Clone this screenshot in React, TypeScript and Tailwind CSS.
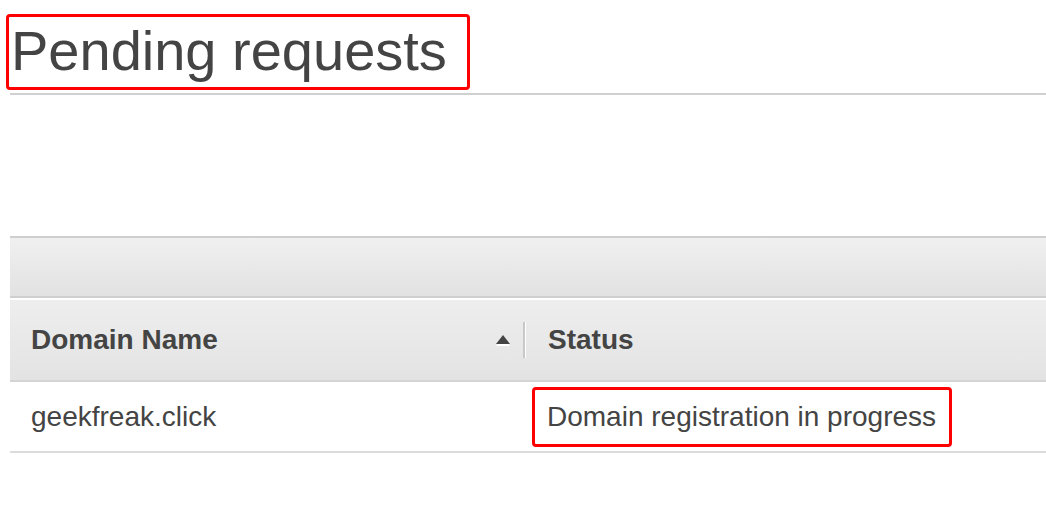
import React from 'react';

type PendingRequest = {
  domain: string;
  status: string;
};

const requests: PendingRequest[] = [
  { domain: 'geekfreak.click', status: 'Domain registration in progress' },
];

const SortArrow = () => (
  <svg width="16" height="11" viewBox="0 0 16 11" className="shrink-0">
    <polygon points="8,1 15,10 1,10" fill="#fff" transform="translate(0,1)" />
    <polygon points="8,0 15,9 1,9" fill="#444" />
  </svg>
);

const App: React.FC = () => {
  return (
    <div
      className="min-h-[516px] w-[1046px] bg-white pl-[10px] text-[#444]"
      style={{ fontFamily: '"Liberation Sans", Arial, Helvetica, sans-serif' }}
    >
      <div className="pt-[14px]">
        <h1 className="-ml-[4px] inline-block w-[464px] rounded-[4px] border-[3px] border-[#ff0000] pt-[2px] pb-[5px] pl-[2px] text-[56px] leading-[63px] font-normal">
          Pending requests
        </h1>
      </div>
      <div className="mt-[3px] h-[2px] bg-[#d0d0d0]" />

      <div className="mt-[141px]">
        <div className="h-[2px] bg-[#cfcfcf]" />
        <div className="h-[58px] bg-gradient-to-b from-[#f0f0f0] to-[#e2e2e2]" />
        <div className="h-[2px] bg-[#cfcfcf]" />
        <div className="h-[2px] bg-white" />

        <div className="flex h-[80px] items-center bg-gradient-to-b from-[#eeeeee] to-[#e3e3e3] text-[28px] font-bold">
          <div className="flex w-[513px] items-center justify-between pl-[21px] pr-[12px]">
            <span>Domain Name</span>
            <SortArrow />
          </div>
          <div className="flex h-[36px] w-[3px] shrink-0">
            <div className="w-[2px] bg-[#c8c8c8]" />
            <div className="w-[1px] bg-white" />
          </div>
          <div className="pl-[22px]">Status</div>
        </div>
        <div className="h-[2px] bg-[#d4d4d4]" />

        {requests.map((r) => (
          <div key={r.domain}>
            <div className="flex h-[69px] items-center text-[28px]">
              <div className="w-[516px] pl-[21px]">{r.domain}</div>
              <div className="pl-[6px]">
                <span className="inline-block rounded-[4px] border-[3px] border-[#ff0000] pl-[12px] pr-[13px] pt-[7px] pb-[7px] leading-[40px]">
                  {r.status}
                </span>
              </div>
            </div>
            <div className="h-[2px] bg-[#dcdcdc]" />
          </div>
        ))}
      </div>
    </div>
  );
};

export default App;
